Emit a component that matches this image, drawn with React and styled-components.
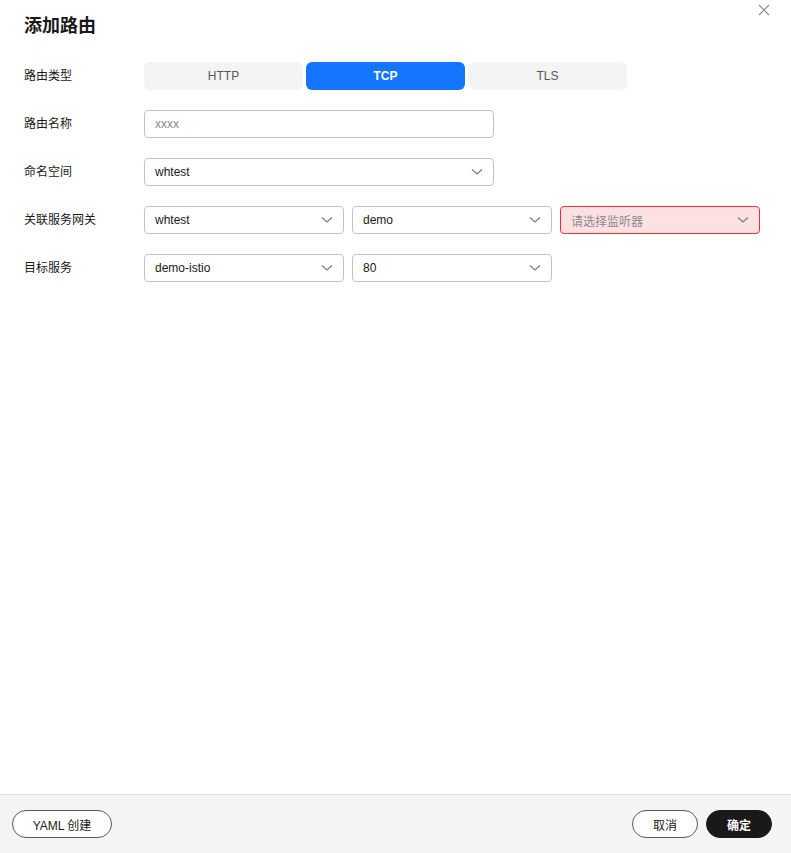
import React from "react";
import styled, { createGlobalStyle } from "styled-components";

const Global = createGlobalStyle`
  html, body { margin: 0; padding: 0; background: #fff; }
  body { font-family: "Liberation Sans", Arial, "Noto Sans CJK SC", sans-serif; color: #191919; }
  * { box-sizing: border-box; }
`;

const Dialog = styled.div`
  position: relative;
  width: 791px;
  height: 853px;
  display: flex;
  flex-direction: column;
  background: #fff;
`;

const Header = styled.div`
  padding: 12px 24px 0;
  height: 36px;
  display: flex;
  align-items: center;
`;

const Title = styled.h1`
  margin: 0;
  font-size: 18px;
  line-height: 24px;
  font-weight: 700;
  font-family: "Noto Sans CJK SC", sans-serif;
  color: #191919;
`;

const Close = styled.button`
  position: absolute;
  top: 3px;
  right: 20px;
  width: 14px;
  height: 14px;
  padding: 0;
  border: 0;
  background: transparent;
  display: flex;
  align-items: center;
  justify-content: center;
`;

const Body = styled.div`
  flex: 1;
  padding: 26px 24px 0;
  display: flex;
  flex-direction: column;
  gap: 20px;
`;

const Row = styled.div`
  display: flex;
  align-items: center;
  height: 28px;
`;

const Label = styled.div`
  width: 120px;
  flex: none;
  font-size: 12px;
  line-height: 16px;
  margin-top: -2px;
  font-family: "Noto Sans CJK SC", sans-serif;
  color: #191919;
`;

const Fields = styled.div`
  display: flex;
  gap: 8px;
`;

const Segmented = styled.div`
  display: flex;
  gap: 3px;
`;

const Seg = styled.div`
  width: 159px;
  height: 28px;
  border-radius: 6px;
  display: flex;
  align-items: center;
  justify-content: center;
  font-size: 12px;
  background: ${(p) => (p.$active ? "#1476ff" : "#f4f4f4")};
  color: ${(p) => (p.$active ? "#fff" : "#595959")};
  font-weight: ${(p) => (p.$active ? 700 : 400)};
`;

const Box = styled.div`
  width: ${(p) => p.$w}px;
  height: 28px;
  border: 1px solid ${(p) => (p.$error ? "#e5323c" : "#c2c2c2")};
  background: ${(p) => (p.$error ? "#fde1e2" : "#fff")};
  border-radius: 4px;
  padding: 0 10px;
  display: flex;
  align-items: center;
  justify-content: space-between;
  font-size: 12px;
  font-family: "Liberation Sans", Arial, "Noto Sans CJK SC", sans-serif;
  color: ${(p) => (p.$placeholder ? "#8a8a8a" : "#191919")};
`;

const Footer = styled.div`
  height: 59px;
  border-top: 1px solid #dedede;
  background: #f4f4f4;
  display: flex;
  align-items: center;
  justify-content: space-between;
  padding: 0 19px 0 12px;
`;

const Group = styled.div`
  display: flex;
  gap: 8px;
`;

const Btn = styled.button`
  width: ${(p) => p.$w}px;
  height: 28px;
  border-radius: 14px;
  border: 1px solid ${(p) => (p.$primary ? "#191919" : "#595959")};
  background: ${(p) => (p.$primary ? "#191919" : "#fff")};
  color: ${(p) => (p.$primary ? "#fff" : "#191919")};
  font-size: 12px;
  font-weight: ${(p) => (p.$primary ? 700 : 400)};
  font-family: "Liberation Sans", Arial, "Noto Sans CJK SC", sans-serif;
  padding: 0;
  display: flex;
  align-items: center;
  justify-content: center;
`;

const Chevron = () => (
  <svg width="12" height="8" viewBox="0 0 12 8">
    <polyline points="1,1.5 6,6 11,1.5" fill="none" stroke="#7a7a7a" strokeWidth="1.2" />
  </svg>
);

const Select = ({ w, value, placeholder, error }) => (
  <Box $w={w} $error={error} $placeholder={placeholder}>
    <span>{value}</span>
    <Chevron />
  </Box>
);

export default function App() {
  return (
    <>
      <Global />
      <Dialog>
        <Header>
          <Title>添加路由</Title>
        </Header>
        <Close aria-label="close">
          <svg width="12" height="12" viewBox="0 0 12 12">
            <path d="M1 1L11 11M11 1L1 11" stroke="#8a8a8a" strokeWidth="1.2" />
          </svg>
        </Close>
        <Body>
          <Row>
            <Label>路由类型</Label>
            <Segmented>
              <Seg>HTTP</Seg>
              <Seg $active>TCP</Seg>
              <Seg>TLS</Seg>
            </Segmented>
          </Row>
          <Row>
            <Label>路由名称</Label>
            <Box $w={350} $placeholder>xxxx</Box>
          </Row>
          <Row>
            <Label>命名空间</Label>
            <Select w={350} value="whtest" />
          </Row>
          <Row>
            <Label>关联服务网关</Label>
            <Fields>
              <Select w={200} value="whtest" />
              <Select w={200} value="demo" />
              <Select w={200} value="请选择监听器" placeholder error />
            </Fields>
          </Row>
          <Row>
            <Label>目标服务</Label>
            <Fields>
              <Select w={200} value="demo-istio" />
              <Select w={200} value="80" />
            </Fields>
          </Row>
        </Body>
        <Footer>
          <Btn $w={100}>YAML 创建</Btn>
          <Group>
            <Btn $w={66}>取消</Btn>
            <Btn $w={66} $primary>确定</Btn>
          </Group>
        </Footer>
      </Dialog>
    </>
  );
}
